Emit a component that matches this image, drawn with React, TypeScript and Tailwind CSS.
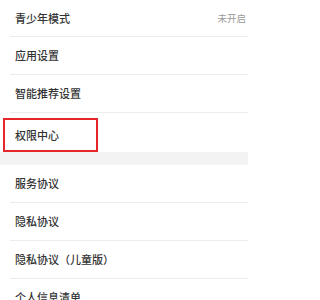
import React from 'react';

type Item = { label: string; value?: string };

const groupOne: Item[] = [
  { label: '青少年模式', value: '未开启' },
  { label: '应用设置' },
  { label: '智能推荐设置' },
];

const groupTwo: Item[] = [
  { label: '服务协议' },
  { label: '隐私协议' },
  { label: '隐私协议（儿童版）' },
  { label: '个人信息清单' },
];

const Row: React.FC<{ item: Item; first?: boolean }> = ({ item, first }) => (
  <div
    className={`ml-[10px] flex items-center justify-between border-b border-[#ececec] pl-[5px] pr-[2px] ${
      first ? 'h-[37px]' : 'h-[38px]'
    }`}
  >
    <span className="text-[11px] font-medium text-[#333333]">{item.label}</span>
    {item.value && <span className="text-[9.5px] text-[#9a9a9a]">{item.value}</span>}
  </div>
);

export default function App() {
  return (
    <div
      className="h-[300px] w-[248px] overflow-hidden bg-white"
      style={{ fontFamily: '"Noto Sans CJK SC", "Noto Sans", sans-serif' }}
    >
      {groupOne.map((item, i) => (
        <Row key={item.label} item={item} first={i === 0} />
      ))}
      <div className="relative ml-[10px] flex h-[39px] items-center pl-[5px] pt-[5px]">
        <span className="text-[11px] font-medium text-[#333333]">权限中心</span>
        <div className="pointer-events-none absolute left-[-7px] top-[5px] h-[34px] w-[95px] border-2 border-[#e5262b]" />
      </div>
      <div className="h-[13px] bg-[#f3f3f3]" />
      {groupTwo.map((item) => (
        <Row key={item.label} item={item} />
      ))}
    </div>
  );
}
